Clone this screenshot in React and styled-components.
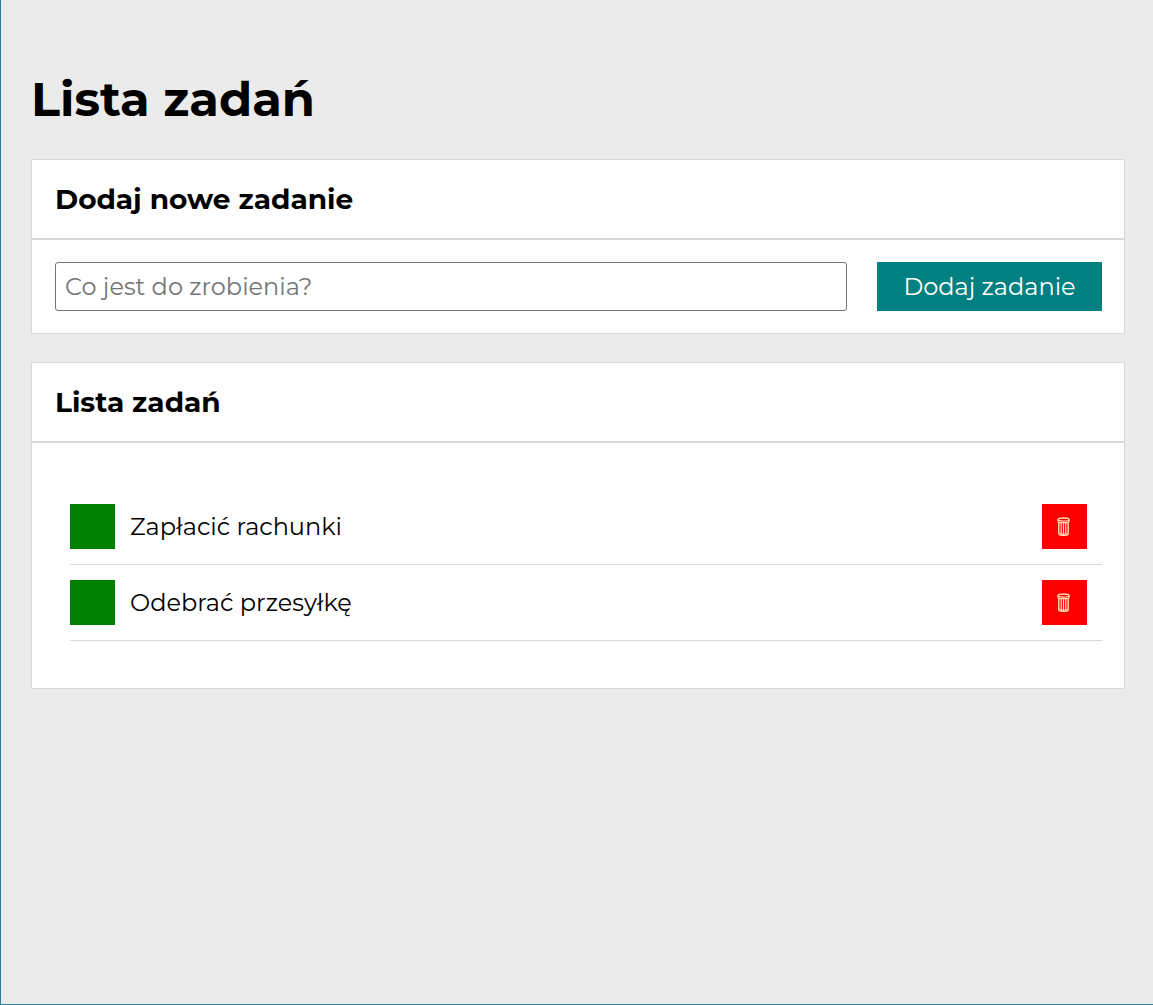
import React, { useState } from "react";
import styled, { createGlobalStyle } from "styled-components";

const GlobalStyle = createGlobalStyle`
  *, *::before, *::after { box-sizing: border-box; }
  body {
    margin: 0;
    background: #ebebeb;
    color: #000;
    font-family: Montserrat, Inter, "Liberation Sans", sans-serif;
    font-size: 24px;
    font-weight: 400;
    line-height: 30px;
  }
  button, input { font: inherit; }
`;

const Page = styled.main`
  min-height: 100vh;
  padding: 70px 28px 30px 30px;
  border-left: 1px solid #2a7fa5;
  border-bottom: 1px solid #2a7fa5;
`;

const Title = styled.h1`
  margin: 0 0 30px;
  font-size: 48px;
  line-height: 59px;
  font-weight: 700;
`;

const Card = styled.section`
  margin-bottom: 28px;
  background: #fefefe;
  border: 1px solid #d9d9d9;
`;

const CardTitle = styled.h2`
  margin: 0;
  padding: 22px 23px;
  border-bottom: 2px solid #d9d9d9;
  font-size: 28px;
  line-height: 34px;
  font-weight: 700;
`;

const CardBody = styled.div`
  padding: 22px 22px 22px 23px;
`;

const Form = styled.form`
  display: flex;
  gap: 30px;
`;

const TextField = styled.input`
  flex: 1;
  min-width: 0;
  height: 49px;
  padding: 0 9px;
  border: 1px solid #767676;
  border-radius: 3px;
  background: #fff;
  color: #000;

  &::placeholder {
    color: #757575;
    opacity: 1;
  }
`;

const AddButton = styled.button`
  flex: 0 0 225px;
  border: 0;
  background: teal;
  color: #fff;
  cursor: pointer;
`;

const List = styled.ul`
  margin: 24px 0 25px;
  padding: 0 0 0 15px;
  list-style: none;
`;

const Item = styled.li`
  display: flex;
  align-items: center;
  gap: 15px;
  padding: 15px 15px 15px 0;
  border-bottom: 1px solid #d9d9d9;
`;

const ItemText = styled.span`
  flex: 1;
  text-decoration: ${({ $done }) => ($done ? "line-through" : "none")};
`;

const SquareButton = styled.button`
  display: flex;
  align-items: center;
  justify-content: center;
  width: 45px;
  height: 45px;
  padding: 0;
  border: 0;
  background: ${({ $color }) => $color};
  color: #fff;
  cursor: pointer;
`;

const TrashIcon = () => (
  <svg width="15" height="20" viewBox="0 0 15 20" fill="none" stroke="#ffe2b8" aria-hidden="true">
    <ellipse cx="6.5" cy="2.6" rx="5.5" ry="1.6" strokeWidth="1.3" />
    <path d="M1 2.6v1.8C1 6 12 6 12 4.4V2.6" strokeWidth="1.3" />
    <path d="M1.8 5.2V16.6C2 19 11 19 11.2 16.6V5.2" strokeWidth="1.4" />
    <path d="M4.2 6V17.4M6.5 6.2V18M8.8 6V17.4" strokeWidth="1.2" />
    <path d="M2.5 16.2C4 17.3 9 17.3 10.5 16.2" strokeWidth="0.8" />
  </svg>
);

export default function App() {
  const [text, setText] = useState("");
  const [tasks, setTasks] = useState([
    { id: 1, content: "Zapłacić rachunki", done: false },
    { id: 2, content: "Odebrać przesyłkę", done: false },
  ]);

  const addTask = (event) => {
    event.preventDefault();
    const content = text.trim();
    if (!content) return;
    setTasks([...tasks, { id: Date.now(), content, done: false }]);
    setText("");
  };

  const toggleTask = (id) =>
    setTasks(tasks.map((task) => (task.id === id ? { ...task, done: !task.done } : task)));

  const removeTask = (id) => setTasks(tasks.filter((task) => task.id !== id));

  return (
    <>
      <GlobalStyle />
      <Page>
        <Title>Lista zadań</Title>
        <Card>
          <CardTitle>Dodaj nowe zadanie</CardTitle>
          <CardBody>
            <Form onSubmit={addTask}>
              <TextField
                aria-label="Co jest do zrobienia?"
                placeholder="Co jest do zrobienia?"
                value={text}
                onChange={(event) => setText(event.target.value)}
              />
              <AddButton type="submit">Dodaj zadanie</AddButton>
            </Form>
          </CardBody>
        </Card>
        <Card>
          <CardTitle>Lista zadań</CardTitle>
          <CardBody>
            <List>
              {tasks.map((task) => (
                <Item key={task.id}>
                  <SquareButton
                    type="button"
                    $color="green"
                    aria-label={`Ukończ: ${task.content}`}
                    aria-pressed={task.done}
                    onClick={() => toggleTask(task.id)}
                  >
                    {task.done ? "✓" : null}
                  </SquareButton>
                  <ItemText $done={task.done}>{task.content}</ItemText>
                  <SquareButton
                    type="button"
                    $color="red"
                    aria-label={`Usuń: ${task.content}`}
                    onClick={() => removeTask(task.id)}
                  >
                    <TrashIcon />
                  </SquareButton>
                </Item>
              ))}
            </List>
          </CardBody>
        </Card>
      </Page>
    </>
  );
}
